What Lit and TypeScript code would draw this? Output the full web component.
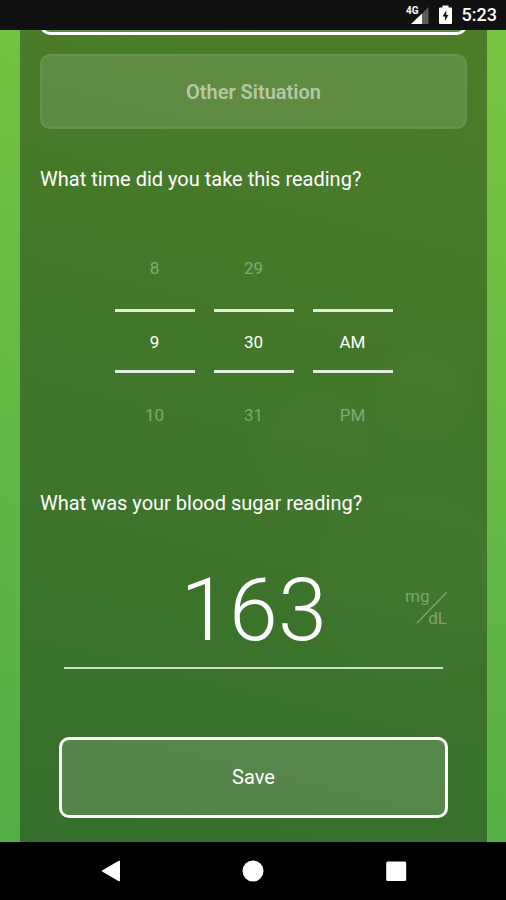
import { LitElement, html, css, svg } from "lit";
import { customElement, property, state } from "lit/decorators.js";

@customElement("status-bar")
class StatusBar extends LitElement {
  static styles = css`
    :host {
      display: flex;
      align-items: center;
      justify-content: flex-end;
      gap: 10px;
      height: 30px;
      padding-right: 9px;
      background: #111;
      color: #fff;
      font: 500 18px/30px Roboto, "Noto Sans", sans-serif;
    }
    svg {
      display: block;
    }
    .net {
      font: 700 10px Roboto, sans-serif;
    }
  `;

  render() {
    return html`
      <svg width="23" height="20" viewBox="0 0 23 20" fill="#fff" role="img" aria-label="Signal">
        <path d="M5 19 L16 8.500 V19Z" />
        <path d="M16 8.500 L22.500 2 V19 H16Z" fill="#5c5c5c" />
        <text class="net" x="0" y="9">4G</text>
      </svg>
      <svg width="13" height="20" viewBox="0 0 13 20" role="img" aria-label="Battery charging">
        <path d="M3.500 0.500h6v2H12a1 1 0 0 1 1 1V18a1 1 0 0 1-1 1H1a1 1 0 0 1-1-1V3.500a1 1 0 0 1 1-1h2.500z" fill="#fff" />
        <path d="M7.300 5.500 L3.500 11.500h2.500V16L9.500 10H7.300z" fill="#111" />
      </svg>
      <time>5:23</time>
    `;
  }
}

@customElement("picker-wheel")
class PickerWheel extends LitElement {
  @property() label = "";
  @property({ type: Array }) values: string[] = [];
  @property({ type: Number }) index = 0;
  @property({ type: Boolean }) wrap = false;

  static styles = css`
    :host {
      display: grid;
      grid-template-rows: 82px 64px 84px;
      width: 80px;
    }
    .step,
    .current {
      box-sizing: border-box;
      width: 100%;
      margin: 0;
      padding: 0;
      border: 0;
      border-radius: 0;
      background: none;
      color: #fff;
      text-align: center;
      font: 400 17px/24px Roboto, "Noto Sans", sans-serif;
    }
    .step {
      opacity: 0.34;
      cursor: pointer;
    }
    .current {
      border: solid rgba(255, 255, 255, 0.85);
      border-width: 3px 0;
      padding-top: 2px;
      outline: none;
    }
  `;

  private at(offset: number): number | undefined {
    const n = this.values.length;
    const i = this.index + offset;
    if (this.wrap) return (i + n) % n;
    return i >= 0 && i < n ? i : undefined;
  }

  private step(offset: number) {
    const i = this.at(offset);
    return i === undefined
      ? html`<span></span>`
      : html`<button class="step" type="button" @click=${() => (this.index = i)}>${this.values[i]}</button>`;
  }

  render() {
    return html`
      ${this.step(-1)}
      <input class="current" aria-label=${this.label} readonly .value=${this.values[this.index] ?? ""} />
      ${this.step(1)}
    `;
  }
}

const hours = Array.from({ length: 12 }, (_, i) => String(i + 1));
const minutes = Array.from({ length: 60 }, (_, i) => String(i).padStart(2, "0"));

@customElement("app-root")
class AppRoot extends LitElement {
  @state() private reading = "163";

  static styles = css`
    :host {
      display: flex;
      flex-direction: column;
      min-height: 100vh;
      background: #000;
      color: #fff;
      font: 400 20px/24px Roboto, "Noto Sans", sans-serif;
    }
    button,
    input {
      box-sizing: border-box;
      margin: 0;
      color: inherit;
      font: inherit;
    }
    main {
      flex: 1;
      display: flex;
      padding: 0 19px 0 20px;
      background: linear-gradient(194deg, #78c541, #66ba44 45%, #53ae45);
    }
    .panel {
      flex: 1;
      display: flex;
      flex-direction: column;
      min-width: 0;
      padding: 0 20px 24px;
      background:
        radial-gradient(circle at 86% 45%, rgba(255, 255, 255, 0.015) 36px, transparent 56px),
        radial-gradient(circle at 64% 52%, rgba(255, 255, 255, 0.01) 50px, transparent 72px),
        radial-gradient(circle at 84% 68%, rgba(255, 255, 255, 0.015) 84px, transparent 112px),
        rgba(0, 0, 0, 0.36);
    }
    .scrolled {
      display: flex;
      align-items: flex-end;
      height: 5px;
      overflow: hidden;
    }
    .selected {
      flex: 1;
      box-sizing: border-box;
      height: 75px;
      border: 3px solid #fff;
      border-radius: 10px;
      background: rgba(255, 255, 255, 0.12);
    }
    .situation {
      height: 75px;
      margin-top: 19px;
      padding-top: 2px;
      border: 2px solid rgba(255, 255, 255, 0.06);
      border-radius: 10px;
      background: rgba(255, 255, 255, 0.12);
      color: rgba(255, 255, 255, 0.54);
      font-weight: 600;
    }
    .question {
      margin: 38px 0 36px;
      font-size: 20px;
      font-weight: 400;
    }
    .picker {
      display: flex;
      justify-content: center;
      align-items: center;
    }
    .colon {
      width: 19px;
      text-align: center;
      font-size: 17px;
      color: #55653f;
    }
    .space {
      width: 19px;
    }
    .reading-label {
      margin: 34px 0 45px;
    }
    .field {
      position: relative;
      display: flex;
      margin: 0 24px;
    }
    .reading {
      width: 100%;
      height: 109px;
      padding: 0 0 8px;
      border: 0;
      border-bottom: 2px solid rgba(255, 255, 255, 0.75);
      background: none;
      outline: none;
      text-align: center;
      font-size: 88px;
      font-weight: 300;
    }
    .unit {
      position: absolute;
      right: -4px;
      top: 26px;
      display: flex;
      flex-direction: column;
      justify-content: space-between;
      width: 42px;
      height: 42px;
      font-size: 17px;
      line-height: 20px;
      opacity: 0.32;
    }
    .denominator {
      text-align: right;
    }
    .slash {
      position: absolute;
      inset: 0;
    }
    .save {
      height: 81px;
      margin: 68px 19px 0;
      padding-bottom: 2px;
      border: 3px solid #fff;
      border-radius: 10px;
      background: rgba(255, 255, 255, 0.15);
    }
    nav {
      display: grid;
      grid-template-columns: repeat(3, 1fr);
      height: 58px;
      padding: 0 39px;
    }
    .key {
      display: grid;
      place-items: center;
      padding: 0;
      border: 0;
      background: none;
    }
  `;

  private key(label: string, shape: unknown) {
    return html`<button class="key" aria-label=${label}>
      <svg width="22" height="22" viewBox="0 0 22 22" fill="#fff">${shape}</svg>
    </button>`;
  }

  render() {
    return html`
      <status-bar></status-bar>
      <main>
        <form class="panel" @submit=${(e: Event) => e.preventDefault()}>
          <div class="scrolled"><div class="selected"></div></div>
          <button class="situation" type="button">Other Situation</button>

          <h2 class="question">What time did you take this reading?</h2>
          <div class="picker">
            <picker-wheel label="Hour" wrap .values=${hours} .index=${8}></picker-wheel>
            <span class="colon">:</span>
            <picker-wheel label="Minute" wrap .values=${minutes} .index=${30}></picker-wheel>
            <span class="space"></span>
            <picker-wheel label="AM or PM" .values=${["AM", "PM"]} .index=${0}></picker-wheel>
          </div>

          <label class="reading-label" for="reading">What was your blood sugar reading?</label>
          <div class="field">
            <input
              id="reading"
              class="reading"
              inputmode="numeric"
              .value=${this.reading}
              @input=${(e: Event) => (this.reading = (e.target as HTMLInputElement).value)}
            />
            <div class="unit">
              <span>mg</span>
              <svg class="slash" width="42" height="42" viewBox="0 0 42 42">
                <path d="M12 37 L42 6" stroke="#fff" stroke-width="1.500" />
              </svg>
              <span class="denominator">dL</span>
            </div>
          </div>

          <button class="save" type="submit">Save</button>
        </form>
      </main>
      <nav>
        ${this.key("Back", svg`<path d="M3.500 10.200 L19.800 0.800 Q21 0.300 21 1.500 V20.500 Q21 21.700 19.800 21.200 L3.500 11.800 Q2 11 3.500 10.200Z" />`)}
        ${this.key("Home", svg`<circle cx="11" cy="11" r="10.500" />`)}
        ${this.key("Recent apps", svg`<rect x="1.200" y="1.500" width="20" height="19.500" rx="1.500" />`)}
      </nav>
    `;
  }
}
